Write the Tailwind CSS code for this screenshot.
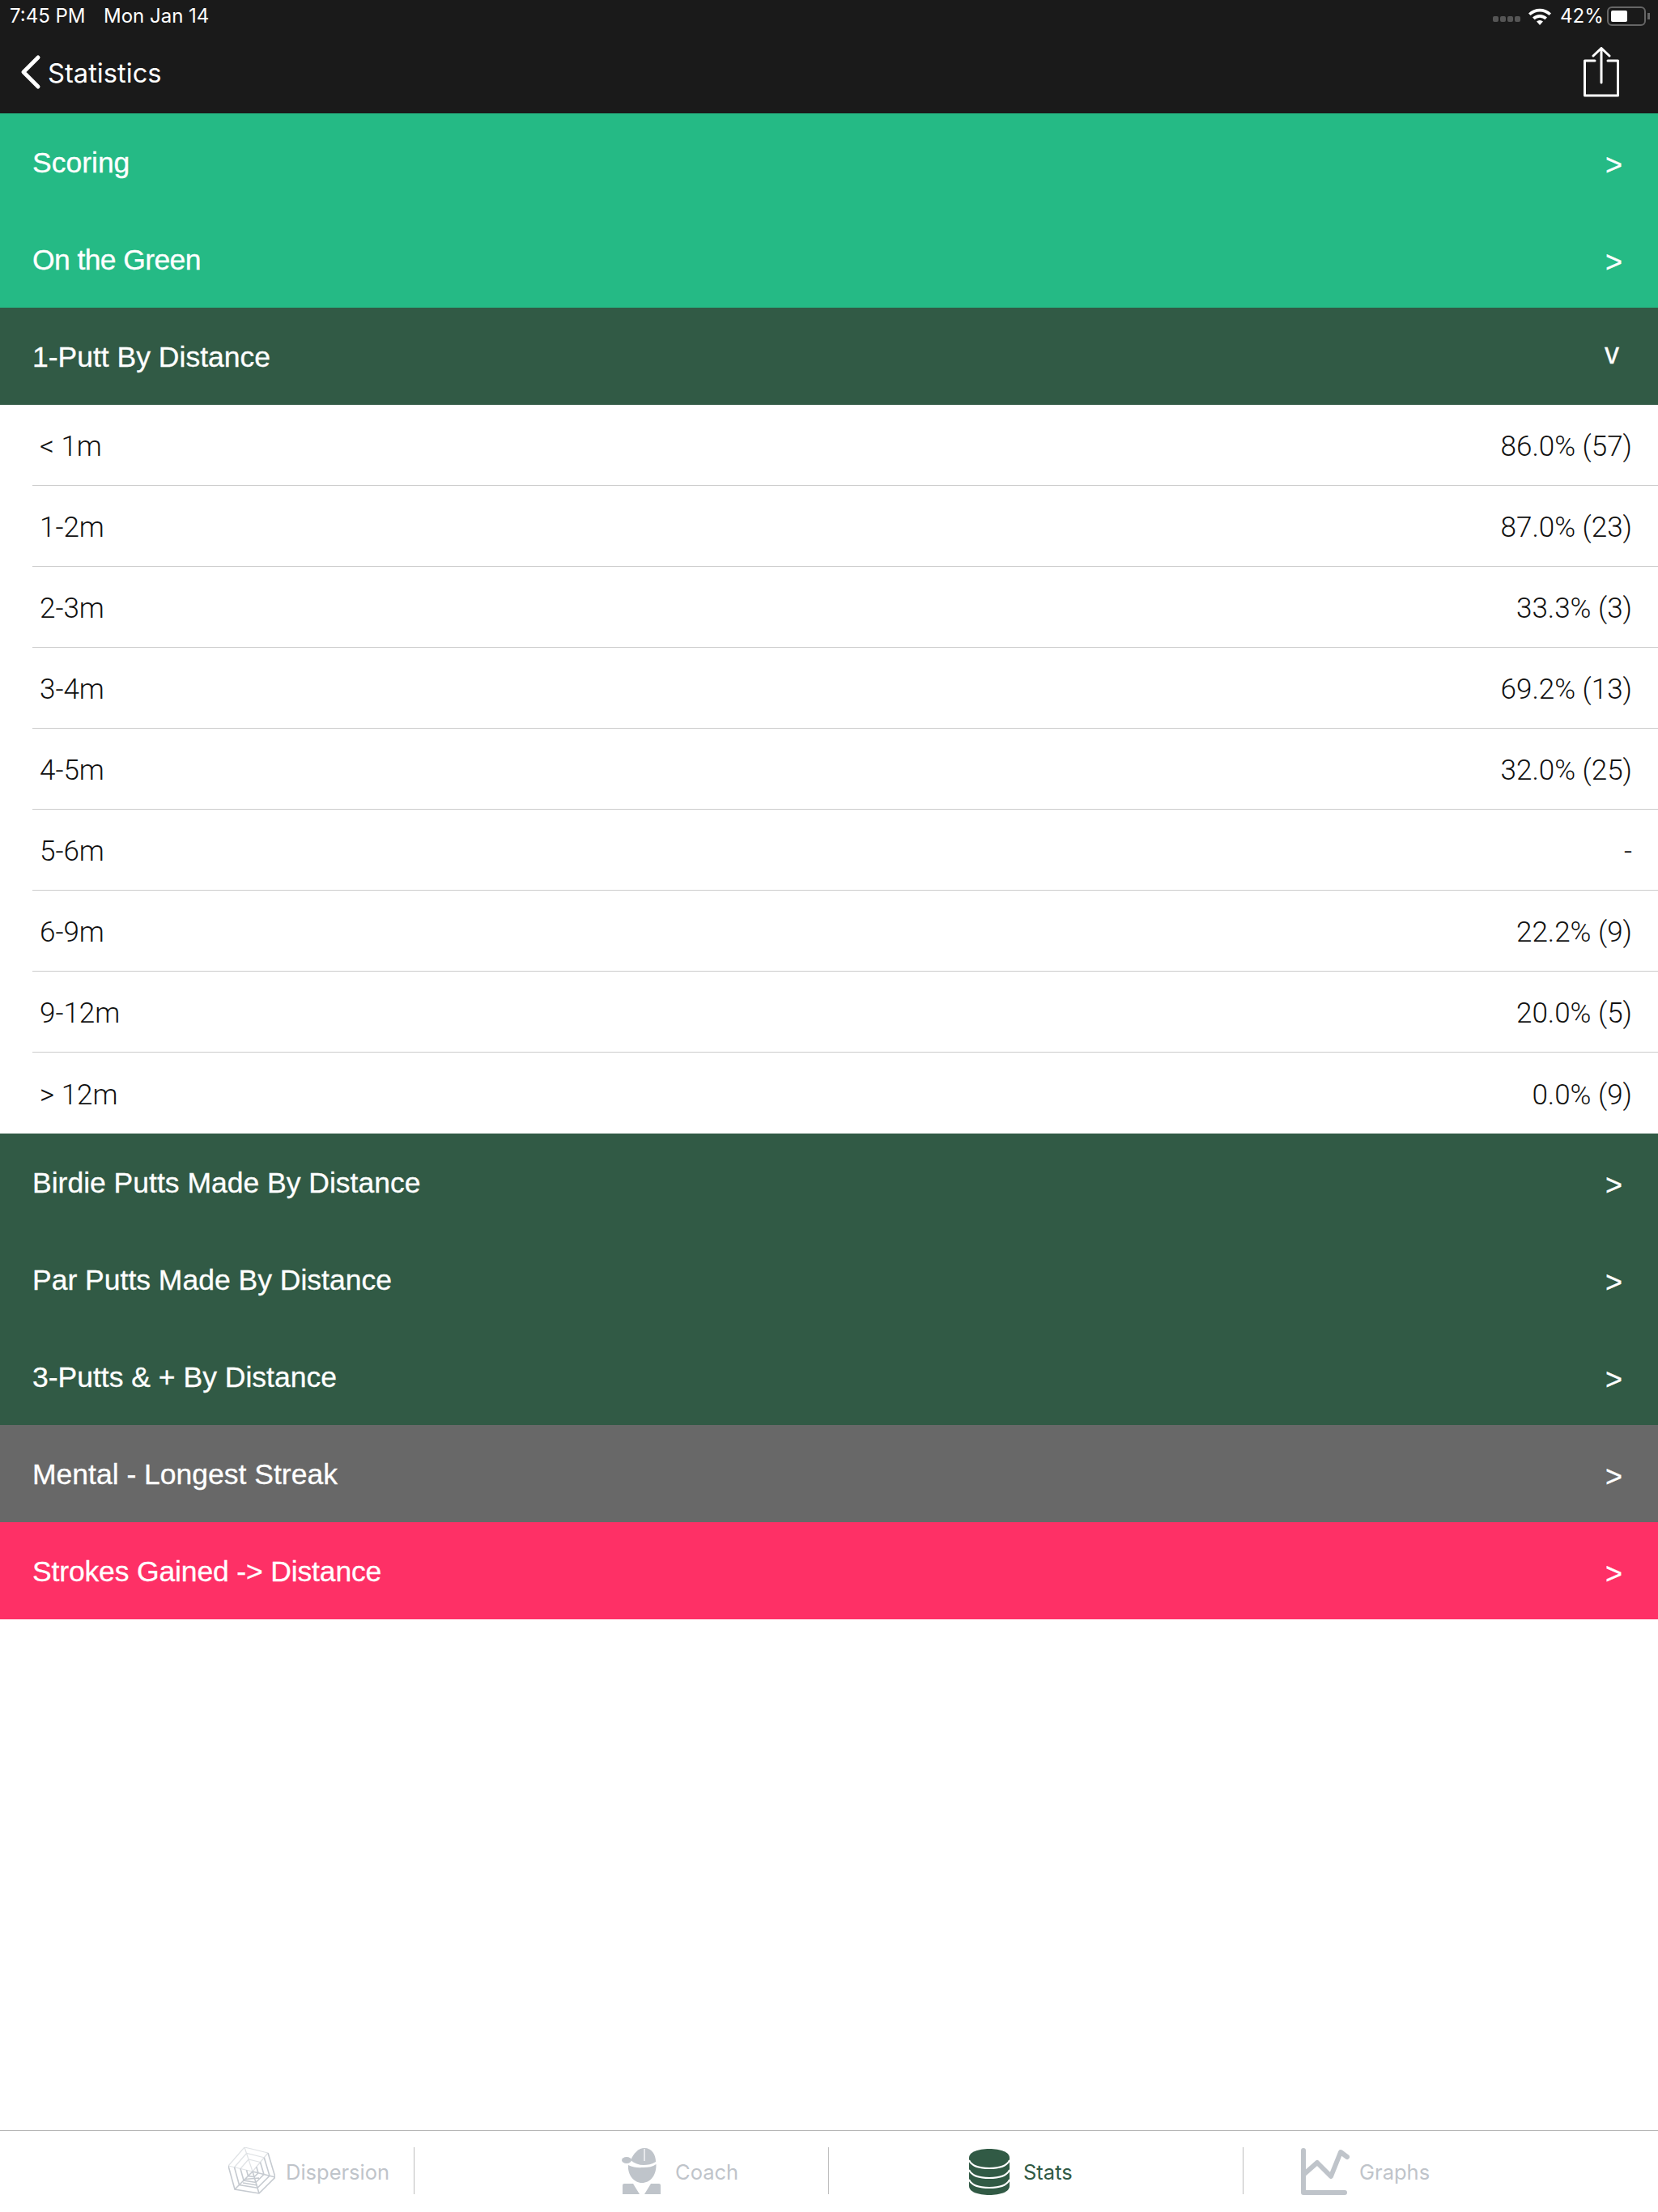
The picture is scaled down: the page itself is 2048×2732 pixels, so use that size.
<!DOCTYPE html>
<html>
<head>
<meta charset="utf-8">
<script src="https://cdn.jsdelivr.net/npm/@tailwindcss/browser@4"></script>
</head>
<body class="bg-white">
<div class="w-[2048px] h-[2732px] flex flex-col bg-white font-['Liberation_Sans',sans-serif] overflow-hidden">
  <header class="h-[140px] bg-[#1a1a1a] text-white flex flex-col shrink-0">
    <div class="h-[40px] flex items-center pl-[12px] pr-[10px] font-['Inter',sans-serif] text-[24px]">
      <span class="w-[116px]">7:45 PM</span><span>Mon Jan 14</span>
      <div class="ml-auto flex items-center">
        <div class="flex gap-[2px] mt-[7px] mr-[9px]"><i class="w-[7px] h-[7px] rounded-[2px] bg-[#555]"></i><i class="w-[7px] h-[7px] rounded-[2px] bg-[#555]"></i><i class="w-[7px] h-[7px] rounded-[2px] bg-[#555]"></i><i class="w-[7px] h-[7px] rounded-[2px] bg-[#555]"></i></div>
        <svg class="w-[30px] h-[22px] mr-[10px]" viewBox="0 0 30 22"><path d="M1 7.5a20 20 0 0 1 28 0l-2.5 2.6a16.4 16.4 0 0 0-23 0z M6 12.6a13 13 0 0 1 18 0l-2.6 2.6a9.3 9.3 0 0 0-12.8 0z M11 17.6a6 6 0 0 1 8 0L15 22z" fill="#fff"/></svg>
        <span class="w-[52px]">42%</span>
        <div class="ml-[6px] w-[48px] h-[24px] rounded-[6px] border-2 border-[#666] p-[3px]"><div class="w-[20px] h-full bg-white rounded-[2px]"></div></div>
        <div class="w-[3px] h-[8px] bg-[#666] ml-[2px]"></div>
      </div>
    </div>
    <div class="h-[100px] flex items-center relative">
      <svg class="w-[28px] h-[44px] ml-[24px] -mt-[2px]" viewBox="0 0 28 44"><path d="M23 4 5 22l18 18" fill="none" stroke="#fff" stroke-width="5" stroke-linecap="round" stroke-linejoin="round"/></svg>
      <span class="ml-[7px] text-[32.7px] font-['Inter',sans-serif] mt-[2px]">Statistics</span>
      <svg class="w-[46px] h-[62px] ml-auto mr-[47px] -mt-[2px]" viewBox="0 0 46 62"><path d="M15 17H2.500v43h41V17H31M23 44V2M13 11 23 1.500 33 11" fill="none" stroke="#fff" stroke-width="3" stroke-linejoin="round" stroke-linecap="round"/></svg>
    </div>
  </header>

  <section class="flex flex-col text-white text-[35.5px] [-webkit-text-stroke:0.3px_#fff]">
    <div class="h-[120px] pl-[40px] pr-[44px] pt-[3px] bg-[#25ba85] flex items-center justify-between"><span>Scoring</span><span class="text-[36px] mt-[4px]">&gt;</span></div>
    <div class="h-[120px] pl-[40px] pr-[44px] pt-[3px] bg-[#25ba85] flex items-center justify-between"><span class="tracking-[-0.6px]">On the Green</span><span class="text-[36px] mt-[4px]">&gt;</span></div>
    <div class="h-[120px] pl-[40px] pr-[48px] pt-[3px] bg-[#315a45] flex items-center justify-between"><span>1-Putt By Distance</span><span class="-mt-[9px] text-[36px]">v</span></div>
  </section>

  <section class="flex flex-col pl-[40px] text-[35px] text-[#111] font-['Roboto',sans-serif] font-light">
    <div class="h-[100px] pl-[9px] pr-[32px] pt-[6px] flex items-center justify-between border-b border-[#cccccc]"><span>&lt; 1m</span><span>86.0% (57)</span></div>
    <div class="h-[100px] pl-[9px] pr-[32px] pt-[6px] flex items-center justify-between border-b border-[#cccccc]"><span>1-2m</span><span>87.0% (23)</span></div>
    <div class="h-[100px] pl-[9px] pr-[32px] pt-[6px] flex items-center justify-between border-b border-[#cccccc]"><span>2-3m</span><span>33.3% (3)</span></div>
    <div class="h-[100px] pl-[9px] pr-[32px] pt-[6px] flex items-center justify-between border-b border-[#cccccc]"><span>3-4m</span><span>69.2% (13)</span></div>
    <div class="h-[100px] pl-[9px] pr-[32px] pt-[6px] flex items-center justify-between border-b border-[#cccccc]"><span>4-5m</span><span>32.0% (25)</span></div>
    <div class="h-[100px] pl-[9px] pr-[32px] pt-[6px] flex items-center justify-between border-b border-[#cccccc]"><span>5-6m</span><span>-</span></div>
    <div class="h-[100px] pl-[9px] pr-[32px] pt-[6px] flex items-center justify-between border-b border-[#cccccc]"><span>6-9m</span><span>22.2% (9)</span></div>
    <div class="h-[100px] pl-[9px] pr-[32px] pt-[6px] flex items-center justify-between border-b border-[#cccccc]"><span>9-12m</span><span>20.0% (5)</span></div>
    <div class="h-[100px] pl-[9px] pr-[32px] pt-[6px] flex items-center justify-between"><span>&gt; 12m</span><span>0.0% (9)</span></div>
  </section>

  <section class="flex flex-col text-white text-[35.5px] [-webkit-text-stroke:0.3px_#fff]">
    <div class="h-[120px] pl-[40px] pr-[44px] pt-[3px] bg-[#315a45] flex items-center justify-between"><span>Birdie Putts Made By Distance</span><span class="text-[36px] mt-[4px]">&gt;</span></div>
    <div class="h-[120px] pl-[40px] pr-[44px] pt-[3px] bg-[#315a45] flex items-center justify-between"><span>Par Putts Made By Distance</span><span class="text-[36px] mt-[4px]">&gt;</span></div>
    <div class="h-[120px] pl-[40px] pr-[44px] pt-[3px] bg-[#315a45] flex items-center justify-between"><span>3-Putts &amp; + By Distance</span><span class="text-[36px] mt-[4px]">&gt;</span></div>
    <div class="h-[120px] pl-[40px] pr-[44px] pt-[3px] bg-[#686868] flex items-center justify-between"><span>Mental - Longest Streak</span><span class="text-[36px] mt-[4px]">&gt;</span></div>
    <div class="h-[120px] pl-[40px] pr-[44px] pt-[3px] bg-[#fe3066] flex items-center justify-between"><span class="tracking-[-0.15px]">Strokes Gained -&gt; Distance</span><span class="text-[36px] mt-[4px]">&gt;</span></div>
  </section>

  <div class="flex-1"></div>

  <nav class="h-[101px] shrink-0 border-t border-[#b2b2b2] grid grid-cols-[512px_512px_512px_512px] font-['Inter',sans-serif] text-[25.5px] text-[#bfc4ca]">
    <div class="relative flex items-center pl-[282px]">
      <svg class="w-[58px] h-[60px] mr-[13px]" viewBox="0 0 58 60" fill="none" stroke="#c5cad0" stroke-width="1.200">
        <path opacity="0.55" d="M0 23 20 0 49 7 M7.500 24.750 22.500 7.500 44.250 12.750 M15 26.500 25 15 39.500 18.500M20 0 30 30M0 23 30 30M49 7 30 30"/>
        <path stroke-width="1.600" d="M49 7 58 37 38 57 8 52 0 23M44.250 12.750 51 35.250 36 50.250 13.500 46.500 7.500 24.750M39.500 18.500 44 33.500 34 43.500 19 41 15 26.500M34.750 24.250 37 31.750 32 36.750 24.500 35.500 22.500 28.250M30 30 58 37M30 30 38 57M30 30 8 52M21 39.500 38 38M18 44 36 47"/>
      </svg>
      <span class="mt-[2px]">Dispersion</span>
      <i class="absolute right-[0px] top-[20px] w-[1px] h-[58px] bg-[#bdbdbd]"></i>
    </div>
    <div class="relative flex items-center pl-[256px]">
      <svg class="w-[49px] h-[58px] mr-[17px]" viewBox="0 0 49 58" fill="#bfc4ca">
        <ellipse cx="6" cy="15" rx="6" ry="4"/>
        <path d="M11 15C15 6 21 0 28 0c9 0 14 8 14 17-5 3-10 4-15 4-6 0-11-2-16-6z"/>
        <path d="M8 21c6 3 12 3.500 19 3 6 0 11-1 15.500-4C43 34 35 43 25 43 15 43 7 33 8 21z"/>
        <path d="M1 46q0-2 2-2h11l8 13H1zM48 46q0-2-2-2H36l-8 13h20z"/>
        <path d="M28 1v15" stroke="#fff" stroke-width="1.200" fill="none"/>
      </svg>
      <span class="mt-[2px]">Coach</span>
      <i class="absolute right-[0px] top-[20px] w-[1px] h-[58px] bg-[#bdbdbd]"></i>
    </div>
    <div class="relative flex items-center pl-[173px] text-[#315a45]">
      <svg class="w-[50px] h-[57px] mr-[17px]" viewBox="0 0 50 57">
        <path d="M0 11C0 4 11 0 25 0s25 4 25 11v35c0 7-11 11-25 11S0 53 0 46z" fill="#315a45"/>
        <path d="M0 14c3 7 13 10 25 10s22-3 25-10M0 26c3 7 13 10 25 10s22-3 25-10M0 38c3 7 13 10 25 10s22-3 25-10" fill="none" stroke="#fff" stroke-width="2"/>
      </svg>
      <span class="mt-[2px]">Stats</span>
      <i class="absolute right-[0px] top-[20px] w-[1px] h-[58px] bg-[#bdbdbd]"></i>
    </div>
    <div class="relative flex items-center pl-[71px]">
      <svg class="w-[60px] h-[58px] mr-[12px]" viewBox="0 0 60 58"><path d="M3 3v52h51M3 33 20 18l17 17L49 5l8 6" fill="none" stroke="#bfc4ca" stroke-width="6" stroke-linecap="round" stroke-linejoin="round"/></svg>
      <span class="mt-[2px]">Graphs</span>
    </div>
  </nav>
</div>
</body>
</html>
